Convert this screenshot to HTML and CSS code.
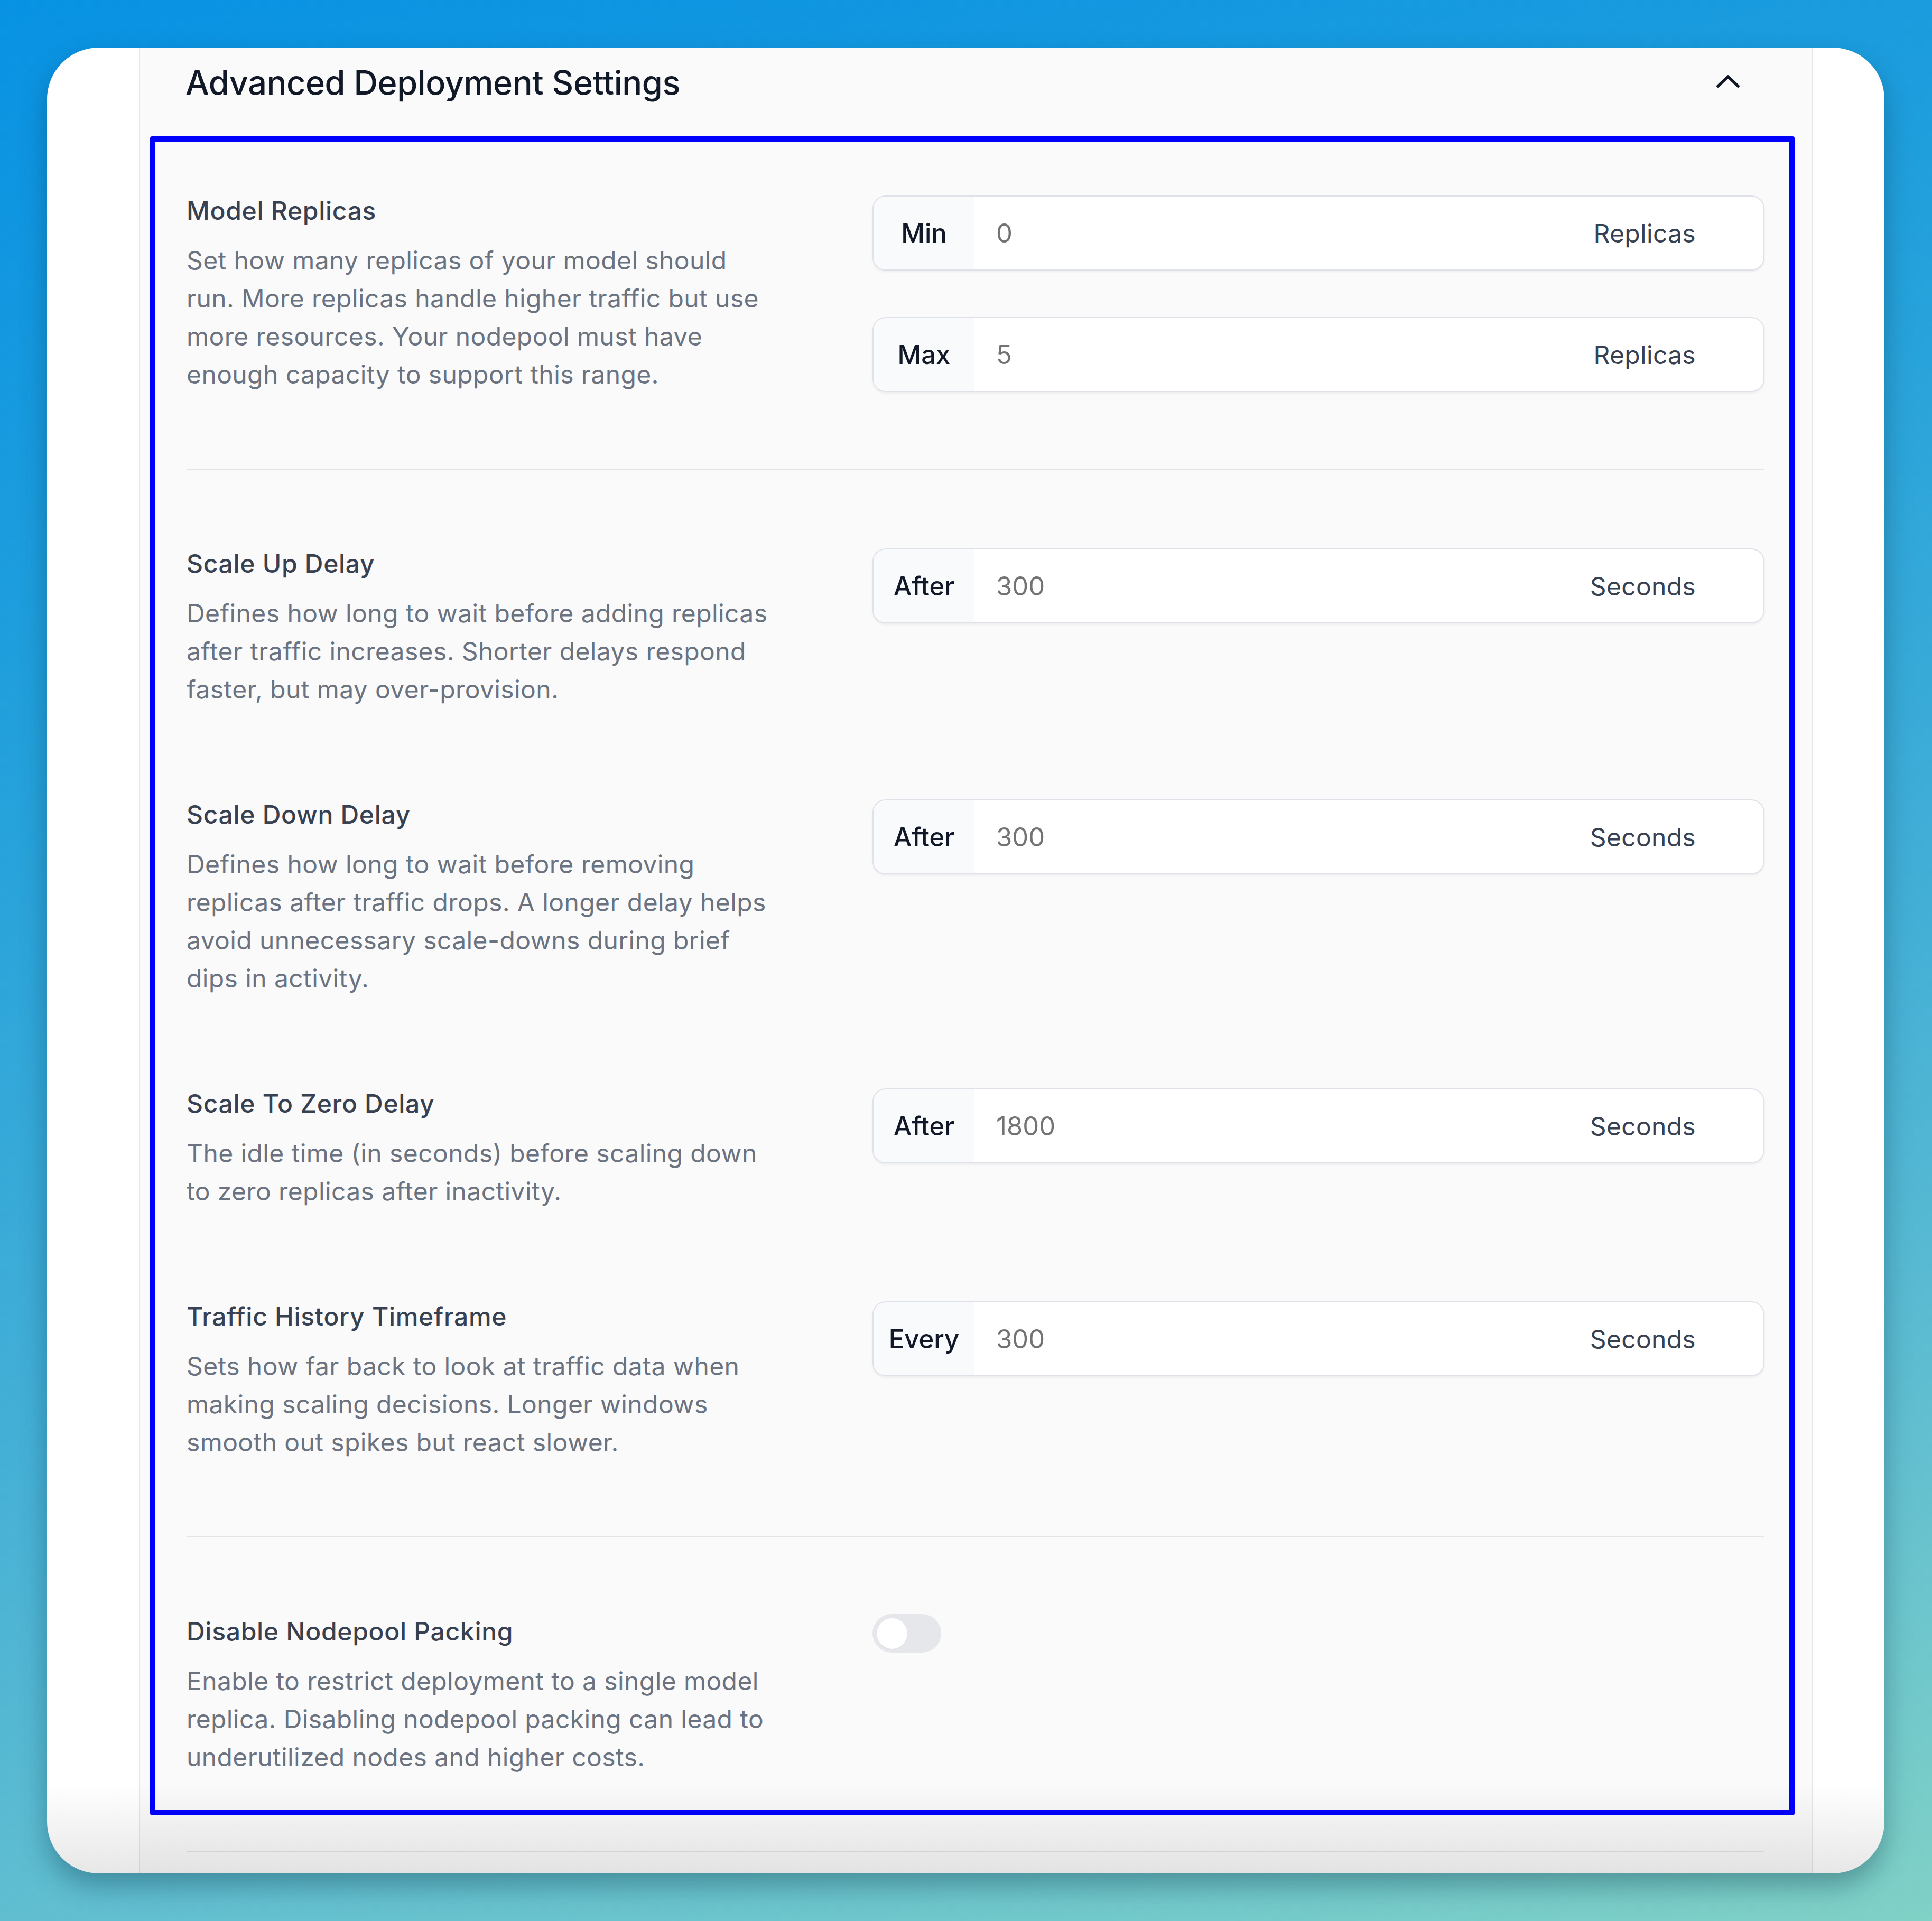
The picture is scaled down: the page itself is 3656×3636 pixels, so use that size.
FILE: index.html
```html
<!DOCTYPE html>
<html lang="en">
<head>
<meta charset="utf-8">
<title>Advanced Deployment Settings</title>
<link rel="stylesheet" href="styles.css">
</head>
<body>
<div class="card">
  <div class="panel">
    <header class="panel-header">
      <h2 class="panel-title">Advanced Deployment Settings</h2>
      <button class="collapse-btn" aria-label="Collapse">
        <svg width="44" height="26" viewBox="0 0 44 26" fill="none"><path d="M3 22 L22 4 L41 22" stroke="#111827" stroke-width="5.5" stroke-linecap="round" stroke-linejoin="round"/></svg>
      </button>
    </header>

    <section class="group">
      <div class="row">
        <div class="info">
          <h3 class="label">Model Replicas</h3>
          <p class="desc">Set how many replicas of your model should run. More replicas handle higher traffic but use more resources. Your nodepool must have enough capacity to support this range.</p>
        </div>
        <div class="controls stack">
          <div class="field"><span class="prefix">Min</span><span class="value">0</span><span class="suffix">Replicas</span></div>
          <div class="field"><span class="prefix">Max</span><span class="value">5</span><span class="suffix">Replicas</span></div>
        </div>
      </div>
    </section>

    <section class="group rows">
      <div class="row">
        <div class="info">
          <h3 class="label">Scale Up Delay</h3>
          <p class="desc">Defines how long to wait before adding replicas after traffic increases. Shorter delays respond faster, but may over-provision.</p>
        </div>
        <div class="controls">
          <div class="field"><span class="prefix">After</span><span class="value">300</span><span class="suffix">Seconds</span></div>
        </div>
      </div>
      <div class="row">
        <div class="info">
          <h3 class="label">Scale Down Delay</h3>
          <p class="desc">Defines how long to wait before removing replicas after traffic drops. A longer delay helps avoid unnecessary scale-downs during brief dips in activity.</p>
        </div>
        <div class="controls">
          <div class="field"><span class="prefix">After</span><span class="value">300</span><span class="suffix">Seconds</span></div>
        </div>
      </div>
      <div class="row">
        <div class="info">
          <h3 class="label">Scale To Zero Delay</h3>
          <p class="desc">The idle time (in seconds) before scaling down to zero replicas after inactivity.</p>
        </div>
        <div class="controls">
          <div class="field"><span class="prefix">After</span><span class="value">1800</span><span class="suffix">Seconds</span></div>
        </div>
      </div>
      <div class="row">
        <div class="info">
          <h3 class="label">Traffic History Timeframe</h3>
          <p class="desc">Sets how far back to look at traffic data when making scaling decisions. Longer windows smooth out spikes but react slower.</p>
        </div>
        <div class="controls">
          <div class="field"><span class="prefix">Every</span><span class="value">300</span><span class="suffix">Seconds</span></div>
        </div>
      </div>
    </section>

    <section class="group">
      <div class="row">
        <div class="info">
          <h3 class="label">Disable Nodepool Packing</h3>
          <p class="desc">Enable to restrict deployment to a single model replica. Disabling nodepool packing can lead to underutilized nodes and higher costs.</p>
        </div>
        <div class="controls">
          <span class="toggle"><span class="knob"></span></span>
        </div>
      </div>
    </section>

    <div class="highlight"></div>
  </div>
</div>
</body>
</html>
```

FILE: styles.css
```css
* { box-sizing: border-box; }

html, body {
  margin: 0;
  padding: 0;
}

body {
  width: 3656px;
  height: 3636px;
  overflow: hidden;
  font-family: Inter, "Noto Sans", sans-serif;
  background: linear-gradient(165deg, #0892e3 0%, #22a0dc 30%, #45b0d6 60%, #62bfd0 80%, #80d1c6 100%);
  padding: 90px 90px 90px 89px;
}

.card {
  position: relative;
  width: 3477px;
  height: 3456px;
  background: #ffffff;
  border-radius: 98px;
  overflow: hidden;
  box-shadow: 0 24px 50px rgba(10, 50, 70, 0.35);
}

.card::after {
  content: "";
  position: absolute;
  left: 0;
  right: 0;
  bottom: 0;
  height: 170px;
  background: linear-gradient(to bottom, rgba(0, 0, 0, 0), rgba(0, 0, 0, 0.095));
  pointer-events: none;
}

.panel {
  position: relative;
  margin-left: 174px;
  width: 3167px;
  height: 100%;
  background: #fafafa;
  border-left: 2px solid #e4e4ea;
  border-right: 2px solid #e4e4ea;
  padding: 0 89px 0 88px;
}

.panel-header {
  height: 131px;
  display: flex;
  align-items: center;
  justify-content: space-between;
}

.panel-title {
  margin: 0 0 0 -2px;
  font-size: 63px;
  font-weight: 500;
  color: #111827;
  letter-spacing: -0.4px;
}

.collapse-btn {
  border: 0;
  background: transparent;
  padding: 0 47px 4px 0;
  display: flex;
}

.group {
  padding: 142px 0;
  border-bottom: 2px solid #e4e4e7;
}

.rows {
  display: flex;
  flex-direction: column;
  gap: 165px;
}

.row {
  display: grid;
  grid-template-columns: 1104px 1688px;
  justify-content: space-between;
  align-items: start;
}

.label {
  margin: 0;
  font-size: 48px;
  line-height: 72px;
  font-weight: 500;
  letter-spacing: 0.7px;
  color: #374151;
}

.desc {
  margin: 22px 0 0;
  font-size: 48px;
  line-height: 72px;
  letter-spacing: 0.4px;
  color: #6b7280;
}

.controls {
  padding-top: 7px;
}

.stack {
  display: flex;
  flex-direction: column;
  gap: 88px;
}

.field {
  display: flex;
  align-items: stretch;
  height: 142px;
  background: #ffffff;
  border: 2px solid #dfe2e8;
  border-radius: 25px;
  overflow: hidden;
  box-shadow: 0 3px 4px rgba(17, 24, 39, 0.05);
  font-size: 49px;
}

.prefix {
  width: 191px;
  flex: none;
  display: flex;
  align-items: center;
  justify-content: center;
  background: #f9fafb;
  color: #111827;
  font-weight: 500;
}

.value {
  flex: 1;
  display: flex;
  align-items: center;
  padding-left: 41px;
  color: #737373;
}

.suffix {
  display: flex;
  align-items: center;
  padding-right: 128px;
  color: #374151;
  font-size: 48px;
  letter-spacing: 0.3px;
}

.toggle {
  display: block;
  width: 130px;
  height: 73px;
  margin-top: -4px;
  border-radius: 40px;
  background: #e5e7eb;
  padding: 8px 0 0 8px;
}

.knob {
  display: block;
  width: 58px;
  height: 58px;
  border-radius: 50%;
  background: #ffffff;
  box-shadow: 0 1px 2px rgba(0, 0, 0, 0.06);
}

.highlight {
  position: absolute;
  left: 19px;
  top: 168px;
  width: 3112px;
  height: 3178px;
  border: 10px solid #0000ff;
  border-radius: 4px;
  pointer-events: none;
}
```
